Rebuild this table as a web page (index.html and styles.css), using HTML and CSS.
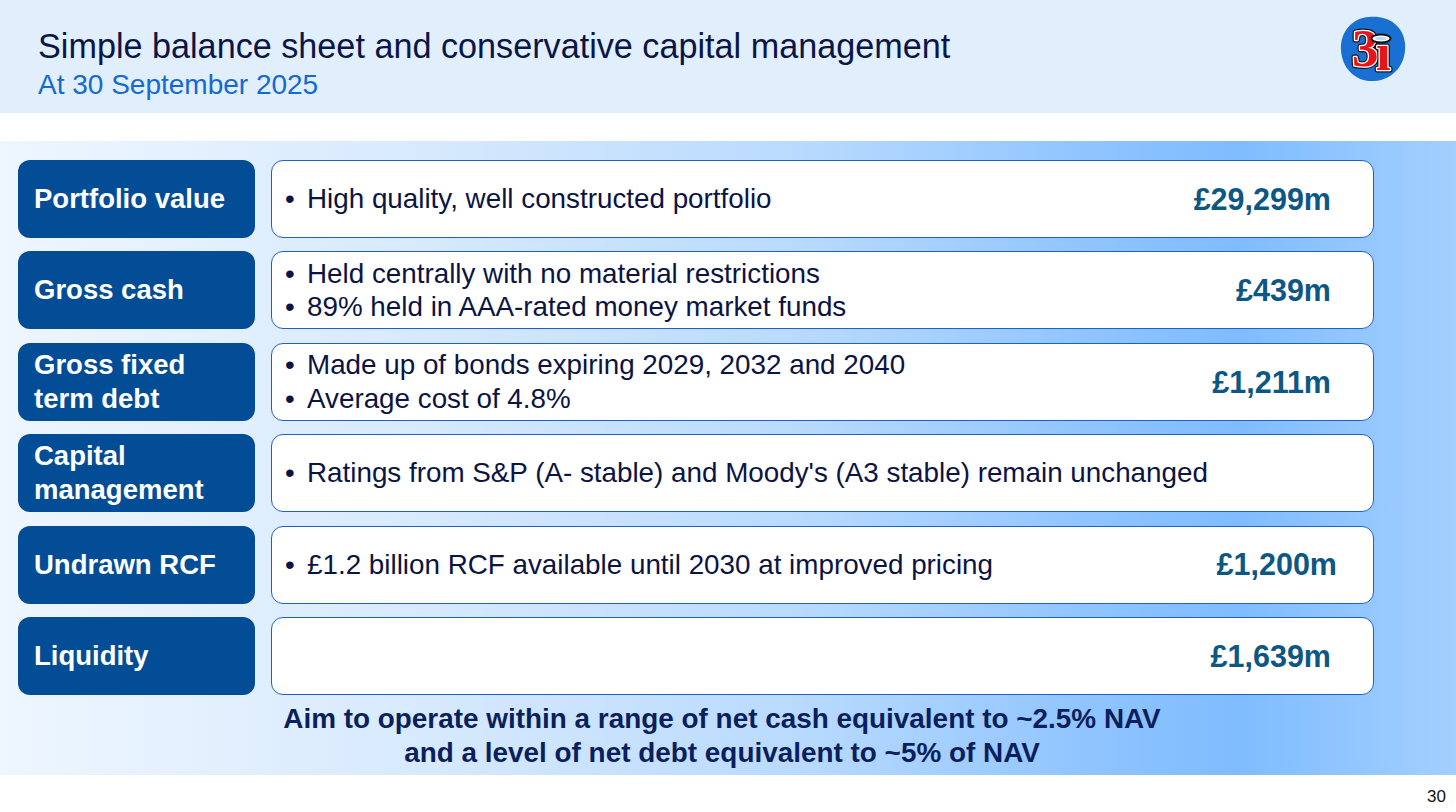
FILE: index.html
```html
<!DOCTYPE html>
<html lang="en">
<head>
<meta charset="utf-8">
<title>Simple balance sheet and conservative capital management</title>
<link rel="stylesheet" href="styles.css">
</head>
<body>
<div class="slide">
  <header class="head">
    <div class="titles">
      <h1 class="title">Simple balance sheet and conservative capital management</h1>
      <p class="subtitle">At 30 September 2025</p>
    </div>
    <svg class="logo" width="70" height="70" viewBox="0 0 70 70" aria-label="3i">
      <path d="M30 4 C47 2 64 11 66 30 C68 50 55 67 35 68 C16 69 3 55 2 37 C1 19 13 5 30 4 Z" fill="#1a6fd3"/>
      <text x="13" y="53" class="logo-t logo-out">3</text>
      <text x="13" y="53" class="logo-t logo-mid">3</text>
      <text x="13" y="53" class="logo-t logo-fill">3</text>
      <text x="37" y="57" class="logo-t logo-out">ı</text>
      <text x="37" y="57" class="logo-t logo-mid">ı</text>
      <text x="37" y="57" class="logo-t logo-fill">ı</text>
      <ellipse cx="42" cy="25.5" rx="9.5" ry="4" fill="#fff" stroke="#111" stroke-width="1.8"/>
      <ellipse cx="42" cy="25.5" rx="6" ry="1.8" fill="#bcdcff"/>
    </svg>
  </header>
  <div class="spacer"></div>
  <main class="panel">
    <div class="rows">
      <div class="row">
        <div class="label">Portfolio value</div>
        <div class="box">
          <ul class="bullets"><li>High quality, well constructed portfolio</li></ul>
          <span class="val">£29,299m</span>
        </div>
      </div>
      <div class="row">
        <div class="label">Gross cash</div>
        <div class="box">
          <ul class="bullets"><li>Held centrally with no material restrictions</li><li>89% held in AAA-rated money market funds</li></ul>
          <span class="val">£439m</span>
        </div>
      </div>
      <div class="row">
        <div class="label">Gross fixed<br>term debt</div>
        <div class="box">
          <ul class="bullets"><li>Made up of bonds expiring 2029, 2032 and 2040</li><li>Average cost of 4.8%</li></ul>
          <span class="val">£1,211m</span>
        </div>
      </div>
      <div class="row">
        <div class="label">Capital<br>management</div>
        <div class="box">
          <ul class="bullets"><li>Ratings from S&amp;P (A- stable) and Moody's (A3 stable) remain unchanged</li></ul>
        </div>
      </div>
      <div class="row">
        <div class="label">Undrawn RCF</div>
        <div class="box">
          <ul class="bullets"><li>£1.2 billion RCF available until 2030 at improved pricing</li></ul>
          <span class="val val-wide">£1,200m</span>
        </div>
      </div>
      <div class="row">
        <div class="label">Liquidity</div>
        <div class="box">
          <ul class="bullets"></ul>
          <span class="val">£1,639m</span>
        </div>
      </div>
    </div>
    <p class="aim">Aim to operate within a range of net cash equivalent to ~2.5% NAV<br>and a level of net debt equivalent to ~5% of NAV</p>
  </main>
  <footer class="foot"><span class="page">30</span></footer>
</div>
</body>
</html>
```
FILE: styles.css
```css
* { box-sizing: border-box; }
html, body { margin: 0; padding: 0; background: #fff; }
body { font-family: "Liberation Sans", Arial, sans-serif; }

.slide {
  width: 1456px;
  height: 812px;
  display: flex;
  flex-direction: column;
  overflow: hidden;
}

.head {
  height: 113px;
  background: #e1eefc;
  display: flex;
  justify-content: space-between;
  align-items: flex-start;
  padding: 29px 47px 0 38px;
}
.title {
  margin: 0;
  font-size: 34.2px;
  line-height: 1;
  font-weight: 400;
  color: #0b1548;
}
.subtitle {
  margin: 8px 0 0;
  font-size: 28px;
  line-height: 1;
  color: #1469d3;
}
.logo { margin-top: -16px; display: block; }
.logo-t {
  font-family: "Liberation Serif", "DejaVu Serif", serif;
  font-weight: 700;
  font-size: 53px;
}
.logo-out { fill: #111; stroke: #111; stroke-width: 5px; stroke-linejoin: round; }
.logo-mid { fill: #fff; stroke: #fff; stroke-width: 2.6px; stroke-linejoin: round; }
.logo-fill { fill: #e8141c; }

.spacer { height: 28px; background: #fff; }

.panel {
  height: 634px;
  background: linear-gradient(to right, #eef6ff 0%, #d6e9fd 30%, #b9dafe 55%, #8fc4ff 75%, #7fbcff 85%, #a3cfff 100%);
  padding: 19px 82px 0 18px;
}
.rows {
  display: flex;
  flex-direction: column;
  gap: 13.4px;
}
.row {
  display: flex;
  gap: 16px;
  height: 78px;
}
.label {
  width: 237px;
  flex: none;
  background: #034d97;
  border-radius: 12px;
  color: #fff;
  font-weight: 700;
  font-size: 27.5px;
  line-height: 34px;
  padding-left: 16px;
  display: flex;
  align-items: center;
}
.box {
  flex: 1;
  background: #fff;
  border: 1.6px solid #1c60c8;
  border-radius: 12px;
  display: flex;
  align-items: center;
  justify-content: space-between;
  padding: 0 42px 0 13px;
}
.bullets {
  list-style: none;
  margin: 0;
  padding: 0;
  font-size: 27.8px;
  line-height: 33.5px;
  color: #0b1443;
}
.bullets li { display: flex; }
.bullets li::before {
  content: "\2022";
  width: 22px;
  flex: none;
}
.val {
  font-weight: 700;
  font-size: 30.5px;
  color: #0d5785;
  line-height: 1;
}
.val-wide { margin-right: -6px; }

.aim {
  margin: 7px -70px 0 -18px;
  text-align: center;
  font-weight: 700;
  font-size: 27.9px;
  line-height: 34px;
  color: #0a1f5c;
}

.foot {
  flex: 1;
  background: #fff;
  display: flex;
  justify-content: flex-end;
  align-items: flex-start;
  padding: 13px 10px 0 0;
}
.page {
  font-size: 17px;
  color: #111;
  line-height: 1;
}
```
